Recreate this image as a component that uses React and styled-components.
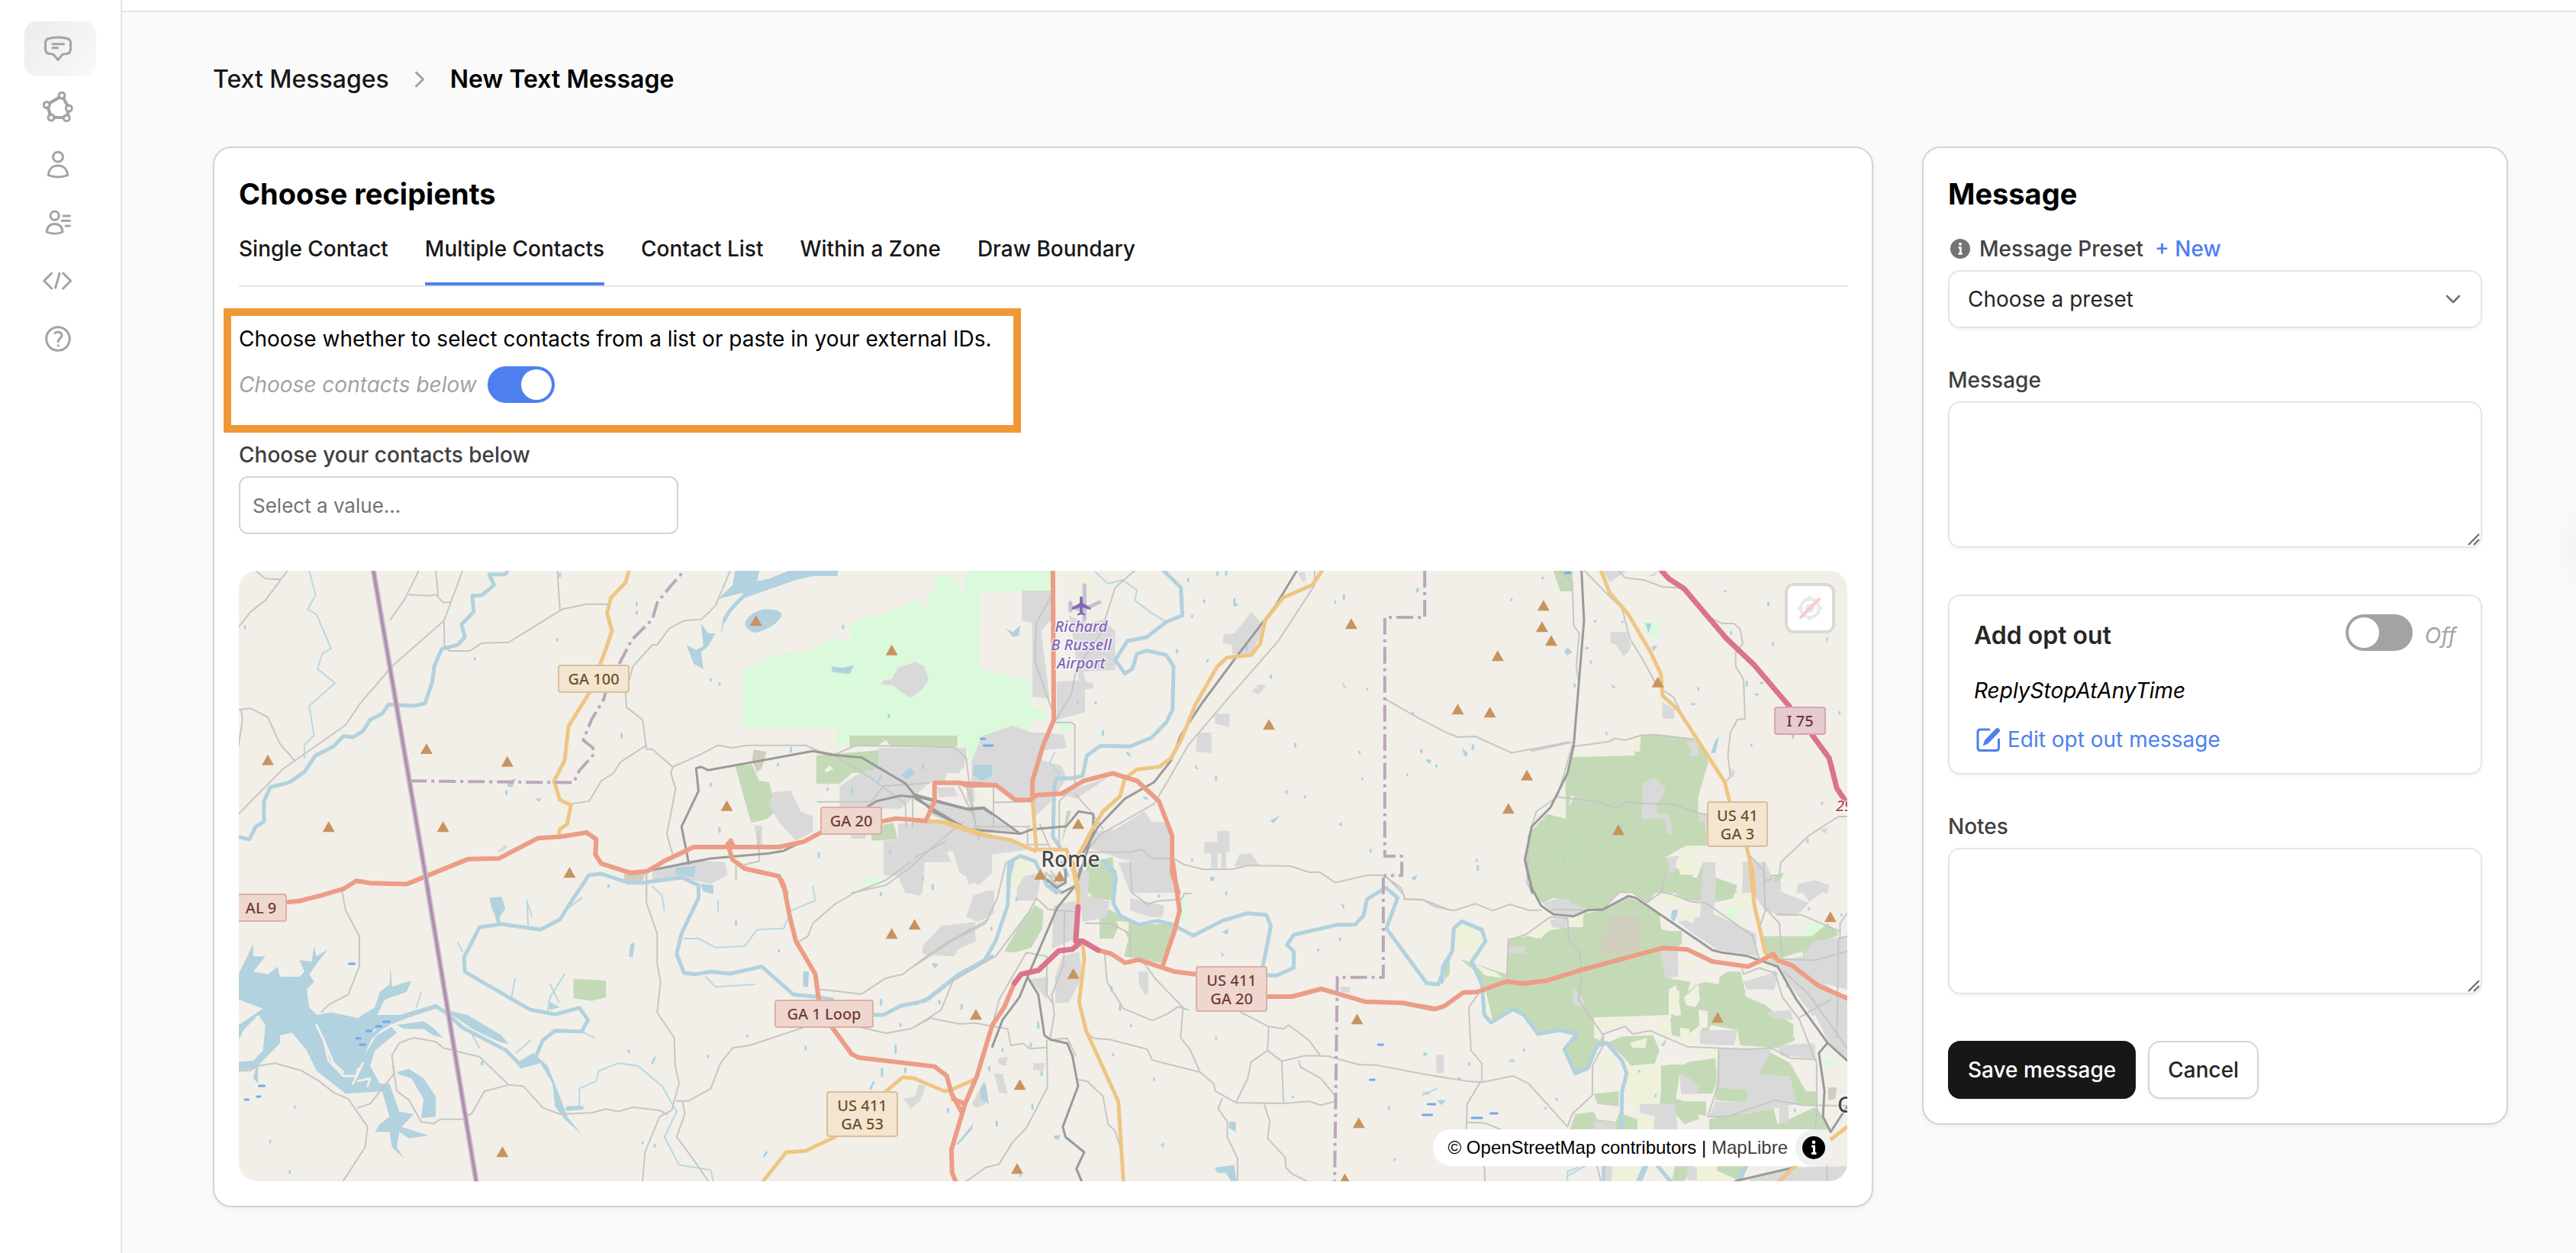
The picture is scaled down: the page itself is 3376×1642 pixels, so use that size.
import React from 'react';
import styled, { createGlobalStyle } from 'styled-components';
import { ChevronDown, ChevronRight } from 'lucide-react';
import { MdLocalAirport } from 'react-icons/md';

// each map tile has its own grid: [x, y, scaleX, scaleY]
const TILES = {
    nw: [300, 730, 0.6378, 0.3333],
    n: [1200, 730, 0.6378, 0.3333],
    ne: [1840, 730, 0.4082, 0.3333],
    sw: [300, 1130, 0.6378, 0.3333],
    s: [1200, 1130, 0.4464, 0.3333],
    se: [1840, 1130, 0.4082, 0.3333],
};

const LAYERS = [
    {
        name: 'military', fill: '#dbfadb',
        tiles: {
            nw: 'M1056,440 1090,415 1150,368 1170,385 1245,318 1282,342 1272,270 1290,245 1330,235 1410,170 1437,208 1435,150 1452,140 1450,75 1480,62 1490,95 1500,90 1505,165 1513,130 1512,54 1693,54 1693,132 1543,138 1541,438 1649,488 1649,590 1679,596 1683,640 1649,640 1649,690 1611,662 1546,705 1526,805 1497,705 1272,702 1272,740 1250,742 1250,672 1056,672Z M1295,1265 1335,1262 1330,1285 1300,1285Z',
            n: 'M290,640 320,650 320,680 300,685Z M702,235 715,235 712,262 702,260Z M468,1120 485,1120 482,1158 468,1150Z',
            ne: 'M770,255 815,255 820,310 800,325 770,290Z',
            se: 'M1030,190 1070,170 1070,230 1040,235Z M1340,775 1385,775 1380,795 1345,795Z M1290,240 1345,230 1340,280 1290,290Z M1190,170 1240,170 1235,200 1195,195Z',
            s: 'M780,140 792,145 795,230 780,240Z M372,350 388,355 388,372 374,370Z M362,733 384,733 380,746 362,744Z',
        },
    },
    {
        name: 'wood', fill: '#c4dab7',
        tiles: {
            nw: 'M1275,702 1497,702 1497,745 1360,745 1350,720 1330,745 1275,745Z M1207,780 1335,760 1335,845 1280,850 1255,892 1207,892Z M1040,820 1075,815 1090,880 1110,885 1125,1000 1105,1030 1073,1045Z M1320,1060 1365,1045 1375,1110 1320,1115Z M1477,755 1515,755 1510,795 1477,795Z',
            n: 'M1310,54 1350,54 1350,135 1325,135Z M350,1200 405,1180 410,1290 395,1320 350,1320Z M645,320 665,315 668,340 648,345Z M310,1000 320,995 300,1130Z',
            ne: 'M540,787 740,780 745,700 820,697 930,715 960,760 978,805 945,940 945,1010 972,1010 972,1135 905,1135 840,1180 870,1220 930,1250 900,1320 412,1320 388,1190 405,1080 460,1010 520,1030 518,870Z M930,1280 1000,1268 1060,1300 1070,1320 910,1320Z',
            sw: 'M708,458 775,465 775,530 745,545 708,535Z',
            s: 'M260,350 305,250 350,168 375,190 372,260 340,335 290,355Z M500,90 520,0 570,30 588,100 575,150 520,140Z M540,200 570,185 600,210 655,245 755,240 760,270 720,395 612,370 625,300 600,240 580,300 540,300Z M1550,420 1568,380 1568,440 1555,460Z',
            se: 'M395,0 845,0 830,80 785,155 735,115 690,115 640,185 580,185 530,205 530,150 480,140 445,160 420,130 405,80Z M335,300 400,290 430,300 460,270 520,255 560,255 580,200 640,190 720,140 740,145 820,200 825,260 850,270 892,270 892,320 840,370 840,450 890,470 850,500 850,600 730,605 610,610 640,700 610,760 590,810 550,830 515,740 555,680 500,660 430,680 380,600 350,578 285,625 265,520 240,440 180,380 330,440Z M845,60 940,60 960,0 1000,60 1070,90 1060,140 1010,155 900,150 860,110Z M870,460 920,470 910,510 940,480 1000,460 1040,430 1080,430 1100,530 1160,560 1200,600 1255,640 1255,700 1200,730 1080,720 1070,660 985,640 970,690 950,640 900,690 860,680 855,610 890,600Z M1080,740 1180,750 1240,790 1290,900 1325,900 1325,955 1255,950 1235,840 1140,840 1080,800Z M825,800 1000,770 1005,860 990,910 890,910 885,830 870,960 825,940Z M825,910 900,940 970,940 970,1000 900,1030 880,1000 820,950Z M1000,885 1105,890 1100,945 1000,935Z M980,1010 1180,940 1200,1030 1325,960 1365,1050 980,1060Z M650,710 700,685 800,680 820,740 800,810 730,800 700,760Z M550,990 610,980 620,1010 680,1020 690,985 750,1010 750,1060 530,1060Z M610,910 690,900 690,960 620,950Z M1145,290 1310,290 1360,240 1395,280 1390,290 1320,320 1290,420 1280,350 1200,380 1150,340Z M1180,60 1220,40 1200,95Z M870,1195 930,1195 900,1253 860,1253Z M1005,1195 1095,1195 1070,1253 1005,1215Z',
        },
    },
    {
        name: 'built', fill: '#d9d9d9',
        tiles: {
            nw: 'M1411,412 1428,430 1438,480 1425,520 1402,555 1385,535 1365,505 1340,500 1345,485 1362,480 1375,435Z M1335,750 1515,750 1515,800 1500,850 1475,850 1470,880 1440,885 1410,940 1380,990 1255,985 1255,900 1300,845 1335,830Z M1118,925 1155,918 1175,1000 1200,1020 1200,1080 1165,1115 1130,1040 1110,975Z M1375,1048 1440,1040 1568,1100 1568,1240 1520,1290 1500,1150 1475,1160 1485,1200 1430,1200 1425,1320 1390,1320 1375,1255 1345,1250 1345,1115 1375,1112Z M870,1235 950,1190 1020,1200 1025,1250 990,1285 950,1270 870,1270Z M1450,960 1568,1000 1568,1080 1500,1060 1440,1010Z M552,1155 570,1130 572,1145 556,1162Z M1455,905 1490,905 1497,940 1460,945Z M1278,1080 1310,1080 1308,1108 1278,1108Z M1080,1055 1096,1055 1096,1135 1085,1135Z',
            n: 'M218,132 282,132 282,240 258,290 275,555 240,550 240,260 218,250Z M315,230 355,260 385,245 410,290 410,445 345,450 350,490 365,495 365,515 348,520 348,610 290,640 290,490 335,485 325,330Z M135,705 200,662 238,690 270,690 305,700 310,750 260,760 260,800 300,820 310,870 280,960 245,1020 240,960 200,955 165,890 115,890 115,805Z M0,750 100,755 100,830 60,825 60,880 0,880Z M690,215 710,260 710,300 690,380 650,380 650,345 632,340 632,305 655,300Z M615,615 645,615 645,670 615,655Z M580,690 608,690 608,770 575,765Z M470,1000 485,1040 520,1045 527,1095 527,1240 535,1320 445,1320 445,1200 350,1140 360,1080 410,1070Z M300,930 395,865 370,900 330,950Z M593,1120 620,1120 620,1077 645,1077 645,1160 638,1160 638,1225 628,1225 628,1165 620,1165 620,1225 607,1225 607,1165 593,1165Z M655,1215 665,1170 690,1165 707,1215Z M0,950 100,1000 130,985 210,1085 110,1075Z M105,900 120,900 122,960 105,960Z M690,530 705,500 720,505 705,540Z M785,60 800,60 802,90 795,100Z M0,1100 40,1085 190,1110 235,1150 150,1170 155,1245 130,1290 90,1240 75,1150 0,1150Z',
            ne: 'M765,890 805,865 840,910 825,950 810,970 815,1005 850,1010 865,1085 845,1090 840,1030 763,1030Z M640,54 715,54 660,100Z M830,570 868,600 868,635 830,635Z M663,295 715,295 720,320 730,345 720,375 705,390 680,345 663,335Z M1090,1200 1130,1190 1160,1240 1160,1320 1085,1320Z M1165,1270 1210,1280 1210,1320 1165,1320Z M1265,1285 1320,1270 1365,1290 1360,1320 1260,1320Z M905,725 945,725 945,785 915,780 920,755Z M945,1010 972,1010 972,1095 965,1040 945,1040Z M840,1180 885,1175 860,1230Z M960,1268 1000,1270 1000,1320 960,1300Z M785,75 815,55 805,75Z M1335,1070 1360,1065 1355,1090Z M1050,830 1063,840 1060,865 1048,865Z',
            sw: 'M1430,320 1470,260 1530,235 1535,310 1500,340 1490,370 1425,360Z M1350,0 1425,0 1425,90 1420,130 1390,120 1380,50Z M1568,110 1530,130 1515,215 1540,235 1568,200Z M1385,930 1410,920 1418,872 1432,880 1420,940 1400,970 1395,950Z',
            s: 'M300,60 370,40 355,150 295,150Z M475,20 510,40 505,130 570,155 560,215 490,235 480,120Z M595,0 750,0 755,120 630,120Z M630,140 730,170 725,215 690,215 630,190Z M405,170 470,150 470,300 400,340Z M430,370 480,350 490,450 450,550 410,555 410,450Z M335,460 390,450 385,540Z M655,430 683,430 683,520 672,520 655,480Z M20,330 75,250 175,235 175,310 105,350 95,370 20,360Z M150,200 200,115 230,110 230,200 200,225Z M165,950 200,860 205,950 180,965Z M240,770 270,765 265,800 245,795Z M230,830 255,830 270,910 245,905Z M345,790 380,790 375,820 345,815Z M1245,490 1275,488 1275,512 1248,510Z M1528,758 1550,758 1550,825 1530,830Z M0,0 20,0 15,130 0,130Z',
            se: 'M445,160 500,140 540,160 580,180 600,190 560,210 480,205Z M880,235 990,200 1060,240 1130,280 1135,370 1010,345 940,290Z M960,0 1000,0 1000,150 985,240 950,230Z M1085,0 1160,0 1200,110 1300,160 1260,210 1210,210 1160,190 1100,90Z M1265,90 1320,70 1365,100 1300,155Z M1150,380 1260,400 1423,540 1423,780 1360,700 1320,620 1210,430Z M1320,310 1423,290 1423,500 1330,470 1210,385 1280,370Z M820,345 880,350 880,450 840,455Z M1010,730 1180,735 1140,835 1240,840 1260,950 1100,990 980,1000 1000,940 1100,945 1105,895 1000,885Z M950,660 1070,660 1060,720 950,715Z M1090,470 1200,430 1190,500 1100,500Z M755,950 870,950 880,1050 800,1050 805,1000 760,985Z M1200,720 1320,710 1320,770 1210,760Z M335,330 390,330 390,357 335,357Z M885,830 905,840 950,880 940,910 890,910Z M610,1020 680,1022 680,1060 610,1050Z M1160,590 1240,580 1250,620 1180,610Z M1205,960 1235,960 1235,1025 1205,1025Z M540,490 580,540 575,570 545,560Z M850,0 875,0 870,35 850,35Z M102,757 128,757 128,828 105,828Z M470,225 525,220 520,262 475,255Z M910,1195 930,1195 1000,1250 910,1250Z M1110,1240 1250,1200 1423,1195 1423,1240 1370,1253 1110,1253Z M640,1195 670,1195 665,1253 645,1253Z',
        },
    },
    {
        name: 'farm', fill: '#eff1da',
        tiles: {
            ne: 'M885,1180 905,1135 935,1140 930,1250 885,1248Z M742,685 762,680 757,765 742,765Z M765,675 795,690 780,705Z M470,985 495,960 520,1030 490,1010Z',
            n: 'M200,1200 220,1180 240,1195 225,1250 205,1310 198,1260Z M345,65 360,65 365,130 340,240 325,200Z',
            s: 'M280,0 350,0 305,40 290,110 278,100Z M590,230 625,235 625,270 600,270Z',
            se: 'M165,260 185,235 250,265 262,310 215,380 190,350 160,350Z M530,220 575,200 575,255 530,255Z M820,605 850,605 855,700 820,690Z M855,505 885,505 880,600 855,600Z M720,800 820,790 820,950 750,950 745,980 710,900Z M610,610 730,615 730,670 640,640 630,700 610,690Z M920,740 1005,735 1005,765 920,765Z M760,1000 805,1000 800,1050 755,1050Z M890,170 940,180 930,240 890,220Z M680,1200 770,1195 740,1253 670,1253Z M880,0 925,0 920,45 885,40Z M415,285 430,245 475,260 455,280 440,300Z M830,130 880,130 885,165 840,165Z M885,650 915,655 920,690 945,680 940,720 890,710Z M620,770 680,765 680,820 630,820Z M725,710 780,690 775,730 735,730Z M880,380 920,390 920,430 890,410Z M1060,120 1110,125 1105,190 1060,170Z M225,400 300,435 315,455 260,445Z M940,1195 1000,1195 1000,1210 1080,1253 940,1253Z',
        },
    },
    {
        name: 'bare', fill: '#f2efe9',
        tiles: {
            nw: 'M1225,835 1235,820 1242,835 1225,848Z',
            ne: 'M535,940 548,940 530,980Z',
            se: 'M900,530 945,480 950,540 935,570 905,560Z M960,440 1015,440 1010,480 970,470Z M830,720 905,700 945,760 900,795 830,795Z M640,660 700,640 800,615 800,640 720,670 650,700Z M1090,520 1130,500 1200,520 1195,545 1130,540Z M1250,640 1320,680 1310,700 1250,690Z M1130,330 1145,280 1160,360 1140,380Z M945,580 975,585 975,650 950,650Z M1280,620 1320,600 1360,700 1320,720Z M825,220 880,230 880,270 830,265Z M945,990 975,1000 975,1040 950,1030Z',
        },
    },
    {
        name: 'quarry', fill: '#d0cebd',
        tiles: {
            nw: 'M1078,757 1105,765 1095,830 1085,845 1075,800Z M812,1245 855,1245 850,1275 812,1275Z',
            se: 'M655,210 757,210 757,350 632,372 635,290 655,285Z M1362,885 1390,885 1385,930 1362,935Z',
        },
    },
    {
        name: 'runway', fill: 'none', stroke: '#c6c1d2', width: 5,
        tiles: { n: 'M347,110V245 M318,195 335,205 M352,200 378,178 M318,180V210' },
    },
    {
        name: 'water', fill: '#b1d2de',
        tiles: {
            nw: 'M1100,205 Q1140,205 1135,235 Q1120,280 1080,298 Q1055,280 1062,250 Q1075,215 1100,205Z M1005,165 1035,110 1040,54 1090,54 1085,95 1110,85 1150,54 1252,54 1250,75 1200,75 1165,90 1120,120 1060,160 1055,140Z M940,345 960,365 975,350 970,260 985,300 1000,300 985,350 970,375 975,440 955,420Z M1238,430 1262,435 1285,425 1275,460 1240,452Z M1380,860 1400,825 1410,850 1395,875Z M1530,820 1560,815 1568,830 1568,860 1545,880 1528,855Z M575,880 590,870 582,905 572,900Z M628,950 642,948 638,962Z M920,1220 960,1215 955,1260 915,1245Z M970,1290 995,1290 995,1320 975,1315Z',
            n: 'M118,840 130,815 158,820 150,860 135,878Z M185,280 200,295 215,268 212,310 200,315Z M652,170 664,190 655,195Z M728,1035 750,1015 735,1048Z M868,1050 876,1042 876,1060Z M1122,750 1132,770 1128,785Z M875,490 886,515 880,512Z M676,345 684,350 680,378Z M575,815 582,835 574,832Z M1018,1262 1030,1250 1024,1268Z M1340,360 1350,375 1338,385Z M1430,500 1438,512 1432,515Z',
            ne: 'M515,370 525,355 540,375 522,388Z M665,500 680,512 670,516Z M1000,720 1012,705 1000,770 985,770Z M1240,690 1256,700 1248,718Z M185,750 205,770 200,790Z M215,755 228,738 220,760Z M795,350 815,348 800,372Z M1355,320 1365,310 1355,340Z M775,260 795,262 785,300Z M232,1210 243,1230 235,1232Z M25,1260 45,1248 30,1272Z',
            sw: 'M20,440 30,400 50,320 50,370 75,370 50,430 80,440 100,410 105,450 145,450 155,430 145,385 170,390 175,330 180,370 203,342 180,400 165,440 175,470 160,500 165,570 180,600 210,590 265,612 300,570 310,510 330,480 332,410 335,490 375,465 365,510 320,540 305,600 360,600 425,560 430,572 370,610 330,640 345,670 300,740 290,800 310,870 330,870 350,980 380,990 355,1040 410,1075 370,1085 350,1060 345,1120 360,1165 335,1120 330,1060 300,1060 310,1030 330,1000 315,900 240,910 180,820 160,740 130,670 105,680 105,710 75,770 60,800 60,870 50,850 55,810 20,820 20,785 50,780 70,740 75,640 60,600 30,660 20,700 20,640 70,575 20,540Z M345,825 370,812 400,850 425,920 425,1000 395,1005 400,930 375,850 350,835Z M625,750 655,800 680,920 695,1000 725,1070 690,1010 670,960 665,870 640,790 600,810 590,790Z M445,580 490,600 560,680 575,715 540,700 500,680 470,620Z M535,140 560,135 568,180 552,230 540,180Z M825,320 834,315 830,375 822,370Z M970,85 995,90 995,125 975,115Z M1180,430 1192,430 1190,490 1180,490Z M655,545 680,570 660,580Z M345,640 400,625 420,650 440,690 420,680 400,655 360,655Z M1445,395 1458,400 1450,418Z',
            s: 'M878,1200 935,1190 942,1253 925,1253 912,1222 885,1220Z M190,890 205,865 215,950 190,930Z M920,1020 940,1020 940,1060 920,1045Z M118,1110 170,1025 165,1050 125,1110Z M405,1075 425,1072 420,1090 408,1088Z M718,1110 730,1100 728,1122Z M862,60 878,58 875,75Z M898,275 920,260 915,285Z M895,355 907,362 900,372Z M1248,160 1260,170 1255,185Z M1455,65 1472,48 1468,70Z M46,400 65,400 58,415Z M210,805 220,800 218,830Z',
            se: 'M860,190 880,185 875,215 865,235 857,220Z M55,905 85,900 80,915Z M105,935 135,935 120,955Z M1225,480 1235,490 1228,495Z M825,720 845,690 835,722Z M855,600 872,598 865,608Z M745,1253 765,1195 785,1195 765,1253Z M635,1195 648,1195 645,1253 635,1253Z M1065,1253 1090,1195 1105,1195 1085,1253Z',
        },
    },
    {
        name: 'island', fill: 'none', stroke: '#f2efe9', width: 3,
        tiles: { sw: 'M180,640 195,700 205,780 235,840 262,840 270,780 300,680 335,640 M190,680 215,790 235,825 M275,790 255,870 M265,860 290,850 285,880 M290,700 300,660 M462,610 500,660 560,715' },
    },
    {
        name: 'stream', fill: 'none', stroke: '#b9d8e1', width: 2,
        tiles: {
            nw: 'M165,54 178,150 162,205 180,225 210,360 192,380 182,440 218,495 165,585 175,700 155,740 155,790 M1055,160 Q1020,210 1012,290',
            n: 'M370,60 395,105 425,90 455,130 450,170 485,220 515,255 M285,770 275,810 295,850 285,900',
            sw: 'M995,1253 990,1210 925,1190 895,1080 920,980 890,880 840,800 800,790 760,820 755,860 720,890 720,960 695,960 M1200,95 1205,150 1155,190 1140,260 1085,265 1060,330 1000,335 965,300 935,300 M980,450 1000,490 1080,480 M870,95 890,130 895,190 M470,315 480,350 M580,540 588,455 M690,190 725,140 M615,250 612,150 622,210 M655,590 660,530 690,440 M660,480 678,550 M500,680 515,730 M385,570 395,510 M590,750 620,700 M725,665 750,690 M1005,150 1005,195',
            se: 'M530,1230 580,1195 M525,1250 525,1215 560,1200 M60,915 105,890',
        },
    },
    {
        name: 'river', fill: 'none', stroke: '#b1d2de', width: 5,
        tiles: {
            nw: 'M572,54 568,68 535,68 545,110 520,150 500,152 503,215 478,265 485,315 470,345 437,362 422,430 418,490 403,575 380,585 328,580 315,615 290,640 275,685 255,708 235,704 215,745 178,780 155,845 125,885 85,905 72,960 72,1040 55,1060 42,1110 20,1100 M1060,150 Q1025,210 1018,250',
            n: 'M510,54 545,120 548,230 515,255 475,315 435,330 410,405 430,458 445,440 455,380 475,368 515,385 530,430 528,600 515,650 485,710 440,745 380,742 352,780 343,860 320,870 290,870 285,900 282,1100 300,1150 M190,1320 192,1200 215,1175 245,1195 270,1290 290,1320 M385,1195 410,1240 408,1320',
            sw: 'M425,565 445,590 480,650 570,740 600,800 625,790 645,700 670,662 725,665 738,620 720,572 670,598 620,580 520,470 485,430 483,375 515,255 560,243 640,265 680,225 705,150 740,50 765,45 820,80 850,80 930,60 965,90 965,140 930,280 920,360 935,435 960,440 990,430 1030,438 1095,410 1160,520 1215,530 1240,540 M1325,600 1345,600 1380,565 1430,545 1500,440 1568,370 M425,565 330,620 290,690 265,800 M555,240 545,170 M695,970 725,965',
            s: 'M0,555 40,535 110,460 200,390 235,310 270,170 275,50 285,0 M555,0 588,60 580,160 600,210 655,245 710,230 755,245 775,260 815,288 900,230 975,200 1030,207 1043,250 1020,405 M1035,445 1060,445 1110,415 1110,350 1090,325 1110,285 1240,245 1290,245 1315,210 1325,145 1380,100 1415,140 1382,260 1440,365 1500,475 1535,480 1548,430 1568,370 M378,50 385,90 425,115 M430,0 445,50',
            se: 'M122,470 125,410 155,350 160,260 185,232 250,265 262,310 218,390 250,480 258,600 280,630 350,578 385,600 430,675 500,660 555,675 515,735 550,830 590,810 620,720 650,710 700,780 715,830 700,900 698,1050 M815,1195 855,1253',
        },
    },
    {
        name: 'pond', fill: 'none', stroke: '#a9d3e6', width: 3,
        tiles: {
            nw: 'M680,65V75 M838,180V190 M838,215V222 M990,480V485 M1008,495V500 M807,695V708 M1262,270V280 M1356,620V628 M1320,830V835 M1340,860 1335,880 M1428,820 1425,830 M1280,910V930 M1230,910V915 M1155,750V765 M990,890V900 M1008,1065V1080 M1212,1165V1180 M1358,1155V1165 M675,322V328 M33,272V280 M505,398V402 M1128,812V818 M570,920V932',
            n: 'M620,60V70 M638,55V70 M560,85V95 M880,150V165 M862,175V180 M593,170V178 M655,165V185 M568,230V235 M1032,125V132 M600,405V410 M537,365V375 M730,465V475 M370,570V575 M333,568V575 M385,685V700 M435,770 440,780 M617,865V875 M470,945 475,950 M762,920V928 M800,940V945 M780,735V745 M912,765V770 M1040,760V766 M1145,740V755 M1052,800 1056,808 M1070,820V824 M1010,855V858 M928,518V520 M1022,612V616 M1153,1190V1195 M1155,1215V1230 M568,1190V1195 M608,1260V1270 M918,870V872 M935,1150V1158',
            ne: 'M345,165V170 M445,80V84 M585,358H590 M600,410V416 M700,255H703 M612,252H616 M548,502V508 M1170,180V190 M1030,134H1033 M1050,295V300 M1185,340V346 M1100,490V505 M1130,540H1136 M1145,495H1152 M945,515V522 M925,578H932 M1115,738V742 M1398,610V616 M650,690V695 M1342,965V970 M1296,1110V1120 M560,875V880 M545,965V968 M700,1050V1058 M558,1110V1114 M530,1165V1168 M515,1192V1196 M55,760V766 M75,800H84 M42,128V134',
            sw: 'M125,1215V1222 M85,1095V1100 M135,960V964 M1340,120V130 M1042,230V245 M780,90V96 M1130,345V350 M1380,635V642 M1340,540V560 M1370,720V750 M1185,725V735 M1065,680V684 M985,760V766 M870,790 875,768 M822,740V746 M1342,810V840 M1325,865 1318,890 M1390,810V825 M1478,970V980 M1105,1140 1100,1155 M875,1110V1118 M850,1100V1105 M520,785V795 M1460,545V555',
            s: 'M135,560V575 M360,630V650 M338,712V724 M255,735V742 M370,825V838 M343,955V968 M238,1020V1035 M95,972V980 M700,850V856 M882,690V694 M632,640V644 M580,752V758 M575,490V505 M600,560V580 M912,118V125 M1246,300V306 M1182,342V346 M222,258V264 M50,90V105 M22,60V68 M296,140V148 M1108,920V924 M1390,962V968 M1495,755V758 M1406,1166V1170 M715,130V135 M308,1230V1233',
            se: 'M65,752H72 M210,790V796 M340,780H352 M385,735V740 M490,930V934 M455,965V968 M175,850H180 M1300,180V184 M1405,205V208 M775,433H778 M755,820V823 M808,915V920 M1185,710V712 M1255,972V978',
        },
    },
    {
        name: 'minor', fill: 'none', stroke: '#c6c6c4', width: 2,
        tiles: {
            nw: 'M55,54 75,85 105,88 M120,54 75,170 45,215 20,275 M480,54 442,250 335,430 270,575 240,660 110,835 20,1010 M442,255 443,350 453,369 495,369 520,338 575,335 685,205 735,185 780,185 M675,54 680,205 M390,54 360,170 332,245 M370,148 410,152 425,148 440,178 455,178 M425,54 430,150 M1030,54 1000,190 985,220 970,245 935,250 905,280 880,345 870,345 830,430 815,540 817,590 850,640 858,755 870,755 912,825 908,850 918,910 900,1090 912,1170 M858,740 805,805 790,850 765,880 740,960 705,970 M912,825 970,775 1005,740 1035,750 1065,740 1185,740 1215,765 1245,775 1290,740 1490,748 1515,790 1520,870 1535,1060 M20,600 45,595 80,630 105,735 135,800 M20,740 28,640 25,600 M1245,780 1320,870 1390,970 1392,1060 M1210,962 1320,962 1345,900 1440,888 M1500,900 1535,1040 M1510,1040 1470,1100 1400,1220 1350,1290 1280,1320 M858,1320 858,1240 M1405,930 1405,1060 M1060,1210 1090,1195 1088,1080 M1042,1270 1042,1215',
            n: 'M820,54 820,110 745,330 640,560 560,740 515,890 490,970 380,1090 350,1160 M450,54 410,120 390,240 385,285 330,440 320,540 285,650 320,650 327,660 327,900 295,960 295,1140 M285,130 248,260 245,410 280,600 M964,557 1030,630 1090,690 1115,708 1150,705 1225,770 1340,728 M345,1160 440,1160 465,1150 485,1185 530,1185 550,1208 590,1228 650,1228 685,1212 770,1215 810,1240 830,1238 862,1280 930,1250 965,1252 1000,1320 M105,900 130,1110 M160,900 160,1060 M120,1060 235,1060 M230,1060 230,1130 270,1130 M255,1050 275,1140 M327,930 360,1000 385,1070 M245,960 160,965 M60,1120 0,1180 M268,1240 290,1290 M278,1235 300,1285',
            ne: 'M500,54 540,95 545,270 563,300 553,430 560,480 M540,740 515,850 490,945 425,1000 400,1100 395,1280 410,1320 M580,54 660,155 700,200 725,320 765,400 805,490 M833,525 865,550 885,600 M690,54 710,82 770,90 830,117 895,122 M985,240 1020,260 1060,262 1080,285 1088,340 1065,375 1065,430 1090,480 1095,635 1070,640 1048,690 1040,780 1048,865 1030,885 M490,943 630,963 680,988 715,963 780,970 860,970 940,1005 970,1012 M410,763 540,728 M545,745 660,725 675,713 710,720 765,700 820,700 930,716 M1423,1020 1395,1020 1300,1095 1210,1200 1205,1250 1180,1252 1175,1270 1158,1270 M1105,1165 1155,1235 1158,1320',
            sw: 'M232,110 240,190 268,290 268,410 245,520 205,560 190,590 M20,820 45,818 60,800 95,790 150,820 185,860 215,905 245,930 285,1040 280,1120 235,1253 M265,965 290,950 340,830 335,760 350,710 380,690 425,705 440,730 515,765 575,875 M337,800 345,900 370,935 395,1020 420,1028 435,1010 480,1010 500,985 525,900 575,875 605,880 645,965 680,990 745,985 775,970 800,980 830,963 885,975 900,992 M858,50 858,160 880,280 880,400 887,470 880,590 915,690 917,800 925,870 910,975 885,1000 855,1140 850,1253 M920,938 945,938 990,890 1010,790 1035,730 1070,720 1180,650 M932,940 937,990 920,1080 955,1170 985,1253 M1300,650 1350,672 1400,655 1445,610 M1165,320 1190,290 1200,240 1245,165 1285,120 1350,70 1400,0 M1215,500 1240,505 1300,518 1350,455 1385,440 1440,360 1480,310 1560,225',
            s: 'M630,0 635,120 680,165 710,152 780,145 790,122 810,122 M1373,52 1425,100 1437,145 1490,147 1568,188 M0,405 105,310 205,240 240,140 265,0 M0,645 75,580 110,465 200,395 235,370 330,200 355,140 M355,140 390,185 470,195 M437,195 435,400 400,520 407,600 395,690 M385,700 387,885 325,1045 285,1100 245,1187 205,1200 150,1253 M50,615 130,635 175,632 270,655 280,720 315,712 335,733 385,728 M555,360 562,470 610,575 695,622 740,595 770,568 800,580 M665,385 705,460 785,570 778,690 805,735 835,825 875,870 880,900 940,945 1080,948 1155,940 1190,955 1232,940 M500,240 570,240 630,280 630,370 M510,680 525,692 570,697 680,735 695,778 835,825 M955,590 1035,645 1080,655 1095,640 1155,700 1188,760 M1037,645 1033,740 1075,782 1080,945 M1033,740 985,785 975,850 940,945 M1075,782 1145,760 1210,762 1300,795 1350,797 1500,835 1568,850 M1125,780 1130,805 1190,850 1230,915 M480,855 505,862 550,920 565,1030 585,1055 603,1130 M900,930 888,968 915,1020 915,1080 945,1165 945,1253 M1023,950 1040,1020 1033,1085 1085,1160 1087,1200 1105,1225 1148,1253 M225,640 245,540 325,355 385,370 M385,370 385,520 405,560 M410,695 445,692 470,760 M380,60 420,90 M395,50 430,85',
            se: 'M0,145 60,147 100,175 160,190 230,163 285,190 340,165 400,188 440,188 M330,465 335,305 390,285 470,215 525,220 530,310 565,350 570,470 560,540 605,620 640,680 640,720 605,800 605,915 540,990 525,1040 M525,1040 400,870 350,840 250,865 200,860 100,840 M240,515 208,570 215,740 250,790 250,865 M245,865 203,950 200,1050 M203,1022 260,1025 310,1050 M640,675 710,645 735,675 790,662 910,725 1100,735 1180,730 1240,770 1325,775 M780,158 825,118 860,125 920,155 970,160 1120,290 1140,380 M640,185 690,118 735,118 780,158 M480,185 640,190 M825,118 840,50 M1155,0 1160,190 1140,260 M1160,180 1205,240 1215,380 M1423,290 1395,300 1390,690 M1010,730 1010,870 975,1000 1040,1000 1190,935 1280,955 1423,957 M1215,380 1320,385 1423,350 M1190,430 1215,530 1270,620 1325,790 1325,1000 1320,1050 M1220,430 1300,520 1423,730 M1085,420 1090,440 1140,415 1190,435 M258,1195 260,1253 M1195,205 1280,208 1395,270 M1423,200 1400,240 1400,300 M1270,610 1370,540 M1358,1195V1220 1380,1250 M620,1195 632,1253',
        },
    },
    {
        name: 'rail', fill: 'none', stroke: '#9a9a9a', width: 3,
        tiles: {
            nw: 'M870,1230 990,1185 1110,1165 1140,1155 1215,1085 M1310,985 1330,960 1380,938 1420,945 1520,993 1550,988 1568,1010 M945,1205 930,1060 965,920 960,830 970,825 985,838 1200,763 1240,778 1300,788 1390,890 1412,942 1450,1005 1520,1070 1570,1078',
            n: 'M783,54 740,190 660,390 590,570 545,700 525,800 490,885 430,950 375,1060 345,1160 M0,935 105,990 140,985 215,1088 M0,950 105,1070 215,1088 240,1070 310,1058 335,1000 365,1010 365,1080 330,1290 300,1320 M270,1270 290,1300 308,1280 308,1230',
            ne: 'M570,54 578,250 545,740 525,850 470,985 410,1060 388,1190 412,1320',
            s: 'M485,20 470,90 415,180 335,430 305,530 255,620 225,725 M330,455 360,520 378,680 395,697 445,712 460,760 477,880 432,1040 440,1080 495,1140 472,1205 487,1253',
            se: 'M390,0 410,100 440,170 480,205 545,212 590,188 640,185 720,133 745,140 990,345 1020,355 1100,368 1200,410 1260,540 1360,710 1423,780 M1360,710 1332,750 1350,900 1345,1000 1370,1060 M1423,960 1370,1060 M1065,1253 1250,1200',
        },
    },
    {
        name: 'secondary', fill: 'none', stroke: '#efc584', width: 5,
        tiles: {
            nw: 'M822,54 815,100 785,160 777,220 787,290 775,360 740,535 698,665 690,800 668,880 680,955 703,975 695,1050 680,1070 678,1090 M1435,1037 1480,1045 1568,1100',
            n: 'M835,54 815,110 755,160 718,250 708,340 690,385 640,395 620,430 575,580 545,720 525,790 500,825 455,835 430,870 420,940 385,1000 360,1080 335,1170 M0,1037 50,1040 130,1090 195,1112 245,1155 M240,950 248,1150 310,1150 325,1240 333,1320',
            ne: 'M633,54 660,140 720,225 790,370 825,460 830,545 880,600 1030,885 1045,960 M1100,1140 1120,1240 1125,1320',
            sw: 'M1350,900 1385,845 1410,850 M1245,1080 1185,1135 1145,1140 1098,1253',
            s: 'M462,0 477,100 477,175 M490,315 495,380 480,550 500,660 595,940 610,1253 M0,852 85,900 105,895 175,852',
            se: 'M1110,0 1125,170 1160,355 1185,380 M1423,1040 1370,1090 1260,1190 1205,1253',
        },
    },
    {
        name: 'primary', fill: 'none', stroke: '#ec9d85', width: 6,
        tiles: {
            nw: 'M145,1352 190,1330 235,1305 262,1273 290,1282 365,1286 492,1187 555,1185 635,1105 680,1100 735,1083 755,1110 753,1170 765,1205 825,1242 860,1235 895,1195 955,1140 1130,1140 1180,1120 1220,1080 M1340,1040 1370,1028 1432,1037 1450,960 1450,887 1503,887 1515,897 1575,897 M1145,1320 1130,1255 1060,1225 1035,1190 1025,1130 1031,1115 1036,1135',
            n: 'M95,890 165,897 205,955 235,955 250,935 300,930 345,880 405,850 455,880 500,960 527,1095 527,1240 540,1320 M282,54 284,640 262,740 240,880 240,945',
            sw: 'M118,157 145,152 M1140,90 1152,210 1165,310 1205,440 1212,540 M1135,70 1140,90 M1240,650 1280,755 1295,768 1450,803 1475,840 1485,910 1505,980',
            s: 'M290,475 260,570 225,640 180,840 145,950 105,1130 107,1220 117,1253 M535,345 575,360 615,395 655,383 760,430 822,440 M755,0 775,190 760,270 725,408 M1032,528 1105,528 1190,498 1320,548 1430,553 1520,577 M110,930 145,950',
            se: 'M60,567 100,577 130,565 190,512 235,510 330,468 380,477 460,465 570,423 830,337 910,343 990,390 1105,410 1165,375 1185,360 1200,385 1245,405 1330,485 1423,535',
        },
    },
    {
        name: 'motorway', fill: 'none', stroke: '#da738c', width: 7,
        tiles: {
            ne: 'M827,54 850,85 900,125 1035,320 1125,425 1238,588 M1308,695 1365,790 1390,910 1415,955',
            s: 'M477,175 470,310 490,310 535,345 M480,320 460,342 420,348 360,425 310,440 290,475',
        },
    },
    {
        name: 'state', fill: 'none', stroke: '#c9b6c8', width: 7,
        tiles: { nw: 'M297,54 410,1320', sw: 'M408,100 508,1253' },
    },
    {
        name: 'stateLine', fill: 'none', stroke: '#ab8bac', width: 3,
        tiles: { nw: 'M297,54 410,1320', sw: 'M408,100 508,1253' },
    },
    {
        name: 'county', fill: 'none', stroke: '#bda6ba', width: 4, dash: '22 6 4 6',
        tiles: {
            nw: 'M372,880 708,887 720,840 750,775 748,750 728,720 745,640 770,560 775,525 M802,420 828,325 870,245 880,180 905,120 935,54',
            n: 'M1046,54 1046,237 964,237 964,1176 999,1176 999,1252 962,1252',
            s: 'M1373,60 1373,452 1238,452 1230,1253',
        },
    },
    {
        name: 'pool', fill: 'none', stroke: '#72a8f2', width: 3,
        tiles: {
            n: 'M134,715H142 M140,741H158 M1335,62H1345',
            sw: 'M247,399H258 M62,879H73 M33,933H40 M58,921H64 M318,627H330 M303,645H313 M283,663H292 M262,692H270 M269,717H280',
            s: 'M1358,717H1372 M1334,855H1347',
            se: 'M77,951H100 M60,993H90 M278,987H299 M218,1005H250',
        },
    },
];

const PEAKS = {
    nw: [[80, 797], [406, 753], [572, 803], [205, 1060], [440, 1060], [1083, 250], [1362, 365], [1023, 977], [700, 1240]],
    n: [[895, 262], [1290, 190], [1287, 274], [1306, 328], [1196, 388], [1525, 491], [1114, 598], [1180, 610], [726, 658], [1256, 857], [1218, 988], [1444, 1072], [334, 1048], [256, 1247], [296, 1254]],
    sw: [[1409, 244], [1362, 280], [1535, 598], [562, 1138]],
    s: [[463, 437], [306, 874], [298, 1204], [1296, 616], [1301, 1024], [1260, 1244]],
    se: [[1369, 214], [1007, 610]],
};

const SHIELD_COLORS = {
    red: ['#efd7cf', '#dbb0a4', '#703d35'],
    yellow: ['#f4e5d1', '#d9bf98', '#6b5228'],
    pink: ['#e6cbd1', '#d8a3b0', '#71304c'],
};

const SHIELDS = [
    { x: 732, y: 872, w: 92, h: 35, kind: 'yellow', lines: ['GA 100'] },
    { x: 1076, y: 1058, w: 79, h: 35, kind: 'red', lines: ['GA 20'] },
    { x: 309, y: 1172, w: 66, h: 35, kind: 'red', lines: ['AL 9'] },
    { x: 1016, y: 1311, w: 128, h: 35, kind: 'red', lines: ['GA 1 Loop'] },
    { x: 1084, y: 1431, w: 92, h: 58, kind: 'yellow', lines: ['US 411', 'GA 53'] },
    { x: 1568, y: 1267, w: 92, h: 58, kind: 'red', lines: ['US 411', 'GA 20'] },
    { x: 2238, y: 1051, w: 78, h: 58, kind: 'yellow', lines: ['US 41', 'GA 3'] },
    { x: 2326, y: 927, w: 66, h: 35, kind: 'pink', lines: ['I 75'] },
];

function Shield({ x, y, w, h, kind, lines }) {
    const [fill, stroke, color] = SHIELD_COLORS[kind];
    return (
        <g>
            <rect x={x} y={y} width={w} height={h} rx="3" fill={fill} stroke={stroke} strokeWidth="2" />
            {lines.map((line, i) => (
                <MapText key={line} x={x + w / 2} y={y + 25 + i * 24} fill={color}>{line}</MapText>
            ))}
        </g>
    )
}

function RoadMap() {
    return (
        <MapSvg viewBox="313 748 2108 800" preserveAspectRatio="xMidYMid slice" role="img" aria-label="Map">
            {LAYERS.map(({ name, fill, stroke, width, dash, tiles }) => (
                <g key={name} fill={fill} stroke={stroke} strokeWidth={width} strokeDasharray={dash} strokeLinejoin="round" strokeLinecap={dash ? 'butt' : 'round'}>
                    {Object.entries(tiles).map(([tile, d]) => {
                        const [x, y, sx, sy] = TILES[tile];
                        return <path key={tile} d={d} transform={`translate(${x} ${y}) scale(${sx} ${sy})`} vectorEffect="non-scaling-stroke" />
                    })}
                </g>
            ))}
            <g fill="#c9935f">
                {Object.entries(PEAKS).map(([tile, peaks]) => peaks.map(([px, py]) => {
                    const [x, y, sx, sy] = TILES[tile];
                    return <path key={`${tile}${px}`} d={`M${x + px * sx} ${y + py * sy - 7}l8 14h-16z`} />
                }))}
            </g>
            {SHIELDS.map((s) => <Shield key={s.x} {...s} />)}
            <g fill="#8464bd" fontStyle="italic">
                <MdLocalAirport x="1402" y="779" size={30} color="#8464bd" />
                <MapText $halo x="1417" y="828">Richard</MapText>
                <MapText $halo x="1417" y="852">B Russell</MapText>
                <MapText $halo x="1417" y="876">Airport</MapText>
            </g>
            <MapText $size={28} $halo x="1403" y="1136" fill="#484848">Rome</MapText>
            <MapText $halo x="2417" y="1063" fill="#b5494e" fontStyle="italic">29</MapText>
            <MapText $size={28} $halo x="2417" y="1458" fill="#484848">C</MapText>
        </MapSvg>
    )
}

const NAV = [
    {
        label: 'Text messages', active: true,
        icon: <><path d="M9 6.2Q20 4 31 6.2Q36.5 7 36.5 12V20Q36.5 26 31 26.5C27 26.6 26 27 25 28.4L20 34.5L15 28.4C14 27 13 26.6 9 26.5Q3.5 26 3.5 20V12Q3.5 7 9 6.2Z" /><path d="M13 13.7H27.5M13 18.7H19.5" /></>,
    },
    {
        label: 'Zones',
        icon: <><path d="M22 7.5L8.5 15.5M6.8 21L10 30.5M15 34H27.5M32.3 31L33.4 26M32.5 18.5L27 8.5" strokeWidth="4" /><circle cx="25" cy="5.2" r="4" /><circle cx="5.3" cy="17.5" r="4" /><circle cx="34.3" cy="22" r="4" /><circle cx="11" cy="34" r="4" /><circle cx="31.3" cy="34.7" r="4" /></>,
    },
    {
        label: 'Contacts',
        icon: <><circle cx="20" cy="9.7" r="6.4" /><path d="M7.4 33.6C8 25.5 13 21 20 21S32 25.5 32.6 33.6Q20 38.2 7.4 33.6Z" /></>,
    },
    {
        label: 'Contact lists',
        icon: <><circle cx="15.7" cy="10.7" r="5.6" /><path d="M5.2 32C5.8 25 9.8 21.4 15.7 21.4S25.5 25 26 32Q15.5 36.6 5.2 32ZM27 11H35.5M25.2 17.3H35.5M30 24H35.5" /></>,
    },
    {
        label: 'Developers',
        icon: <path d="M11.7 10L1.8 20L11.7 30M26.7 10L36.7 20L26.7 30M22 10.3L16.7 29" />,
    },
    {
        label: 'Help',
        icon: <><circle cx="20" cy="20" r="15.3" /><path d="M16 12.4C20 9.6 25.4 11.4 25 15.8C24.6 19.4 20.2 19.8 20.2 23.8M20.2 28.8V29" /></>,
    },
];

const TABS = ['Single Contact', 'Multiple Contacts', 'Contact List', 'Within a Zone', 'Draw Boundary'];

function InfoIcon({ size }) {
    return (
        <svg width={size} height={size} viewBox="0 0 26 26" aria-hidden="true">
            <circle cx="13" cy="13" r="13" fill="currentColor" />
            <circle cx="13" cy="6.8" r="2" fill="#fff" />
            <path d="M10.5 11.5H13.4V19.3M10.5 19.5H16" fill="none" stroke="#fff" strokeWidth="2.6" />
        </svg>
    )
}

function EditIcon() {
    return (
        <svg width="36" height="36" viewBox="0 0 36 36" fill="none" aria-hidden="true">
            <path d="M20 5H8.5Q5 5 5 8.5V29Q5 32.5 8.5 32.5H29Q32.5 32.5 32.5 29V18" stroke="currentColor" strokeWidth="3" strokeLinecap="round" />
            <path d="M11.5 26.5L14 19L28.5 4Q30.5 2 33 4Q35 6.5 33 8.5L18.5 23.5Z" fill="currentColor" />
        </svg>
    )
}

function TextField({ id, label }) {
    return (
        <Field>
            <Label htmlFor={id}>{label}</Label>
            <TextAreaBox>
                <TextArea id={id} />
                <Grip viewBox="0 0 18 18" aria-hidden="true"><path d="M2 16L16 2M9 16L16 9" /></Grip>
            </TextAreaBox>
        </Field>
    )
}

function App() {
    return (
        <>
            <GlobalStyle />
            <Page>
                <Sidebar aria-label="Main">
                    {NAV.map(({ label, active, icon }) => (
                        <NavLink key={label} href="#" aria-label={label} $active={active}>
                            <NavIcon viewBox="0 0 40 40">{icon}</NavIcon>
                        </NavLink>
                    ))}
                </Sidebar>
                <Content>
                    <TopBar />
                    <Main>
                        <Breadcrumb aria-label="Breadcrumb">
                            <a href="#">Text Messages</a>
                            <ChevronRight size={36} strokeWidth={2} color="#a3a3a3" />
                            <strong>New Text Message</strong>
                        </Breadcrumb>
                        <Columns>
                            <Card>
                                <Title>Choose recipients</Title>
                                <Tabs role="tablist">
                                    {TABS.map((tab) => (
                                        <Tab key={tab} role="tab" $active={tab === 'Multiple Contacts'}>{tab}</Tab>
                                    ))}
                                </Tabs>
                                <Highlight>
                                    <p>Choose whether to select contacts from a list or paste in your external IDs.</p>
                                    <SwitchRow>
                                        <SwitchLabel htmlFor="source">Choose contacts below</SwitchLabel>
                                        <Switch id="source" type="checkbox" defaultChecked />
                                    </SwitchRow>
                                </Highlight>
                                <ContactField>
                                    <Label htmlFor="contacts">Choose your contacts below</Label>
                                    <TextInput id="contacts" placeholder="Select a value..." />
                                </ContactField>
                                <MapFrame>
                                    <RoadMap />
                                    <LocateButton aria-label="Find my location" disabled>
                                        <svg width="40" height="40" viewBox="0 0 40 40" fill="none">
                                            <circle cx="20" cy="20" r="12" stroke="#e9e9e9" strokeWidth="4" />
                                            <circle cx="20" cy="20" r="6" fill="#e9e9e9" />
                                            <path d="M20 3.5V8M20 32V36.5M3.5 20H8M32 20H36.5" stroke="#e9e9e9" strokeWidth="4" />
                                            <path d="M7 33L33 7" stroke="#fbcaca" strokeWidth="4" />
                                        </svg>
                                    </LocateButton>
                                    <Attribution>
                                        <span><a href="#">© OpenStreetMap contributors</a> | <MapLink href="#">MapLibre</MapLink></span>
                                        <InfoButton aria-label="Toggle attribution"><InfoIcon size={30} /></InfoButton>
                                    </Attribution>
                                </MapFrame>
                            </Card>
                            <Card>
                                <Title>Message</Title>
                                <Form>
                                    <Field>
                                        <LabelRow>
                                            <InfoIcon size={26} />
                                            <Label htmlFor="preset">Message Preset</Label>
                                            <NewLink href="#">+ New</NewLink>
                                        </LabelRow>
                                        <SelectBox>
                                            <Select id="preset"><option>Choose a preset</option></Select>
                                            <ChevronDown size={32} strokeWidth={2} color="#737373" />
                                        </SelectBox>
                                    </Field>
                                    <TextField id="message" label="Message" />
                                    <OptOut>
                                        <OptOutHead>
                                            <h3>Add opt out</h3>
                                            <Switch id="optout" type="checkbox" aria-label="Add opt out" />
                                            <SwitchLabel htmlFor="optout">Off</SwitchLabel>
                                        </OptOutHead>
                                        <em>ReplyStopAtAnyTime</em>
                                        <EditLink href="#"><EditIcon />Edit opt out message</EditLink>
                                    </OptOut>
                                    <TextField id="notes" label="Notes" />
                                    <Actions>
                                        <Button $primary>Save message</Button>
                                        <Button>Cancel</Button>
                                    </Actions>
                                </Form>
                            </Card>
                        </Columns>
                    </Main>
                </Content>
                <Launcher />
            </Page>
        </>
    )
}

export default App

const GlobalStyle = createGlobalStyle`
    * {
        box-sizing: border-box;
        margin: 0;
    }

    body {
        background: #fafafa;
        color: #000;
        font-family: Inter, sans-serif;
        font-size: 28px;
        line-height: 40px;
        overflow-x: hidden;
    }

    a {
        color: inherit;
        text-decoration: none;
    }

    button, input, select, textarea {
        font: inherit;
        color: inherit;
    }
`

const Page = styled.div`
    display: flex;
    min-height: 100vh;
`

const Sidebar = styled.nav`
    display: flex;
    flex-direction: column;
    gap: 4px;
    width: 160px;
    flex-shrink: 0;
    padding: 28px 32px;
    background: #fff;
    border-right: 2px solid #e5e5e5;
`

const NavLink = styled.a`
    display: flex;
    align-items: center;
    height: 72px;
    padding-left: 24px;
    border-radius: 16px;
    background: ${({ $active }) => ($active ? 'linear-gradient(135deg, #ececec, #f9f9f9)' : 'none')};
`

const NavIcon = styled.svg`
    width: 40px;
    height: 40px;
    fill: none;
    stroke: #a3a3a3;
    stroke-width: 3;
    stroke-linecap: round;
    stroke-linejoin: round;
`

const Content = styled.div`
    flex: 1;
    min-width: 0;
`

const TopBar = styled.header`
    height: 16px;
    background: #fff;
    border-bottom: 2px solid #e5e5e5;
`

const Main = styled.main`
    padding: 64px 89px 60px 119px;
`

const Breadcrumb = styled.nav`
    display: flex;
    align-items: center;
    gap: 22px;
    margin-bottom: 64px;
    font-size: 32px;
    font-weight: 500;
    line-height: 48px;
    color: #171717;

    strong {
        color: #000;
        font-weight: 600;
    }
`

const Columns = styled.div`
    display: grid;
    grid-template-columns: minmax(0, 17fr) minmax(0, 6fr);
    gap: 64px;
    align-items: start;
`

const Card = styled.section`
    padding: 32px;
    background: #fff;
    border: 2px solid #d4d4d4;
    border-radius: 24px;
    box-shadow: 0 2px 6px rgba(0, 0, 0, 0.06);
`

const Title = styled.h2`
    margin-bottom: 24px;
    font-size: 38px;
    font-weight: 700;
    line-height: 56px;
`

const Tabs = styled.div`
    display: flex;
    gap: 48px;
    border-bottom: 2px solid #e5e5e5;
`

const Tab = styled.button`
    padding: 0 0 24px;
    border: none;
    border-bottom: 4px solid ${({ $active }) => ($active ? '#4d80ee' : 'transparent')};
    background: none;
    color: #171717;
    font-weight: 500;
`

const Highlight = styled.div`
    display: flex;
    flex-direction: column;
    gap: 16px;
    width: fit-content;
    margin: 28px 0 0 -20px;
    padding: 10px 28px 29px 10px;
    border: 10px solid #f09837;
`

const SwitchRow = styled.div`
    display: flex;
    align-items: center;
    gap: 14px;
`

const SwitchLabel = styled.label`
    color: #a3a3a3;
    font-style: italic;
`

const Switch = styled.input`
    appearance: none;
    display: flex;
    width: 88px;
    height: 48px;
    padding: 4px;
    border-radius: 24px;
    background: #a3a3a3;

    &::before {
        content: '';
        width: 40px;
        height: 40px;
        border-radius: 50%;
        background: #fff;
    }

    &:checked {
        justify-content: flex-end;
        background: #4d80ee;
    }
`

const Field = styled.div`
    display: flex;
    flex-direction: column;
    gap: 8px;
`

const ContactField = styled(Field)`
    max-width: 576px;
    margin: 9px 0 48px;
`

const Label = styled.label`
    color: #404040;
    font-weight: 500;
`

const TextInput = styled.input`
    height: 76px;
    padding: 0 16px;
    border: 2px solid #d4d4d4;
    border-radius: 12px;
    background: #fff;
    font-size: 26px;

    &::placeholder {
        color: #737373;
        opacity: 1;
    }
`

const MapFrame = styled.div`
    position: relative;
    height: 800px;
    overflow: hidden;
    border-radius: 24px;
    background: #f2efe9;
`

const MapSvg = styled.svg`
    display: block;
    width: 100%;
    height: 100%;
`

const MapText = styled.text`
    font-family: 'Noto Sans', sans-serif;
    font-size: ${({ $size }) => $size || 20}px;
    font-weight: 500;
    text-anchor: middle;
    paint-order: stroke;
    stroke: ${({ $halo }) => ($halo ? 'rgba(255, 255, 255, 0.6)' : 'none')};
    stroke-width: 3px;
`

const LocateButton = styled.button`
    position: absolute;
    top: 16px;
    right: 16px;
    display: grid;
    place-items: center;
    width: 66px;
    height: 66px;
    padding: 0;
    border: 4px solid #dad9d3;
    border-radius: 12px;
    background: #fff;
`

const Attribution = styled.div`
    position: absolute;
    right: 20px;
    bottom: 20px;
    display: flex;
    align-items: center;
    gap: 10px;
    height: 48px;
    padding-left: 20px;
    border-radius: 24px;
    background: #fff;
    font-family: 'Liberation Sans', sans-serif;
    font-size: 24px;
`

const MapLink = styled.a`
    color: #404040;
`

const InfoButton = styled.button`
    display: grid;
    place-items: center;
    width: 48px;
    height: 48px;
    padding: 0;
    border: none;
    border-radius: 50%;
    background: #f0f0f0;
    color: #000;
`

const Form = styled.form`
    display: flex;
    flex-direction: column;
    gap: 48px;
`

const LabelRow = styled.div`
    display: flex;
    align-items: center;
    gap: 12px;
    padding-left: 3px;
    color: #737373;
`

const NewLink = styled.a`
    margin-left: 3px;
    color: #4d80ee;
    font-weight: 500;
`

const SelectBox = styled.div`
    position: relative;

    svg {
        position: absolute;
        top: 22px;
        right: 22px;
        pointer-events: none;
    }
`

const Select = styled.select`
    appearance: none;
    display: block;
    width: 100%;
    height: 76px;
    padding: 0 64px 0 24px;
    border: 2px solid #e5e5e5;
    border-radius: 16px;
    background: #fff;
    box-shadow: 0 2px 4px rgba(0, 0, 0, 0.05);
    color: #262626;
`

const TextAreaBox = styled.div`
    position: relative;
    margin-bottom: 13px;
`

const TextArea = styled.textarea`
    display: block;
    width: 100%;
    height: 192px;
    padding: 16px 24px;
    border: 2px solid #e5e5e5;
    border-radius: 16px;
    background: #fff;
    box-shadow: 0 2px 4px rgba(0, 0, 0, 0.05);
    resize: none;
`

const Grip = styled.svg`
    position: absolute;
    right: 2px;
    bottom: 2px;
    width: 18px;
    height: 18px;
    fill: none;
    stroke: #666;
    stroke-width: 2;
    pointer-events: none;
`

const OptOut = styled.div`
    display: flex;
    flex-direction: column;
    gap: 24px;
    padding: 24px 32px;
    border: 2px solid #e5e5e5;
    border-radius: 16px;
    box-shadow: 0 2px 4px rgba(0, 0, 0, 0.05);
`

const OptOutHead = styled.div`
    display: flex;
    align-items: center;
    gap: 16px;
    height: 56px;

    h3 {
        margin-right: auto;
        color: #262626;
        font-size: 32px;
        font-weight: 600;
    }

    input {
        align-self: flex-start;
    }
`

const EditLink = styled.a`
    display: flex;
    align-items: center;
    gap: 8px;
    color: #4d80ee;
`

const Actions = styled.div`
    display: flex;
    gap: 16px;
`

const Button = styled.button`
    height: 76px;
    padding: 0 24px;
    border: 2px solid ${({ $primary }) => ($primary ? '#171717' : '#d4d4d4')};
    border-radius: 16px;
    background: ${({ $primary }) => ($primary ? '#171717' : '#fff')};
    box-shadow: 0 2px 4px rgba(0, 0, 0, 0.05);
    color: ${({ $primary }) => ($primary ? '#fff' : '#262626')};
    font-weight: 500;
`

// chat bubble parked past the right edge, only its shadow shows
const Launcher = styled.div`
    position: fixed;
    top: 670px;
    right: -96px;
    width: 90px;
    height: 90px;
    border-radius: 50%;
    box-shadow: 0 0 60px rgba(0, 0, 0, 0.08);
`
